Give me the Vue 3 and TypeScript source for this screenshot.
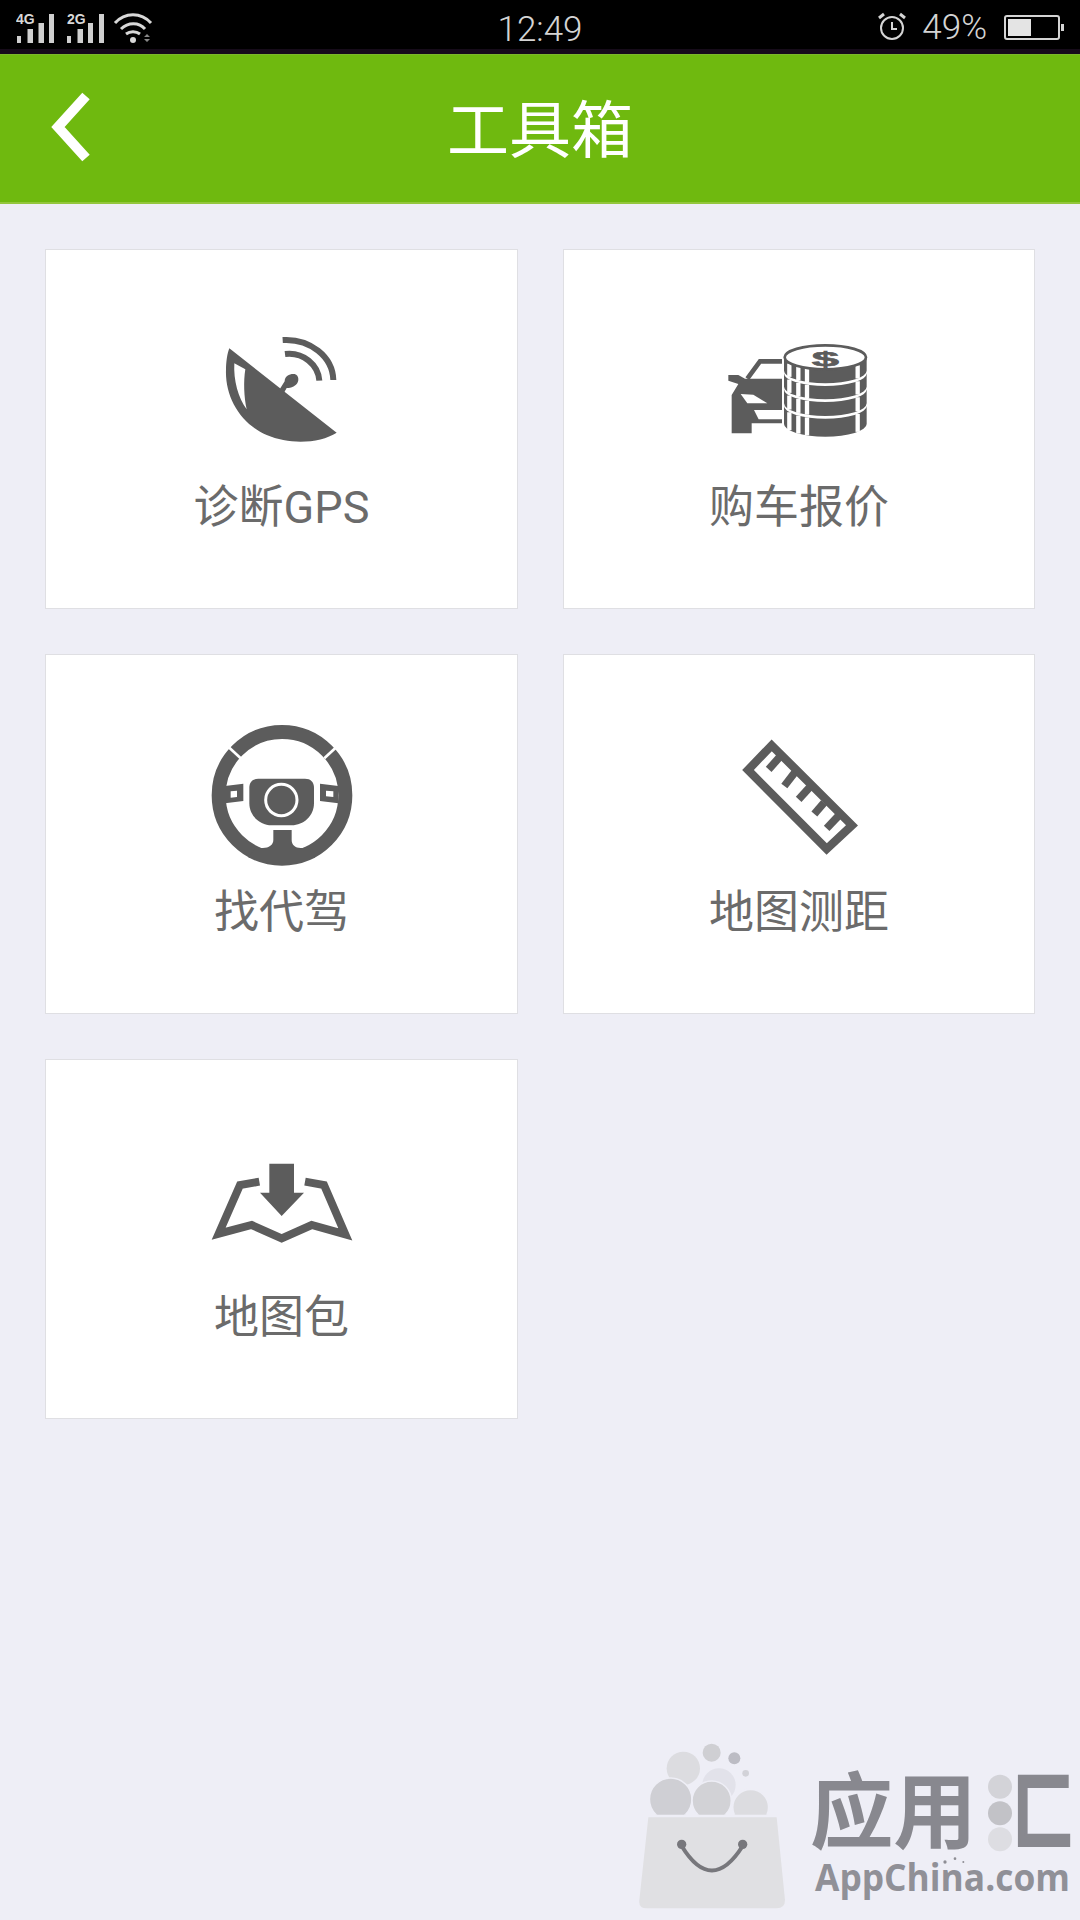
<script setup lang="ts">
const tools = [
  { id: 'gps', label: '诊断GPS', viewBox: '6 -27 540 480' },
  { id: 'price', label: '购车报价', viewBox: '-3 -27 540 480' },
  { id: 'driver', label: '找代驾', viewBox: '6 0 540 480' },
  { id: 'ruler', label: '地图测距', viewBox: '-33 -30 540 480' },
  { id: 'map', label: '地图包', viewBox: '6 -60 540 480' },
]

// each coin is a dark band, the gap to the next one stays white
const coinLayers = [
  { y: 112, h: 40 },
  { y: 160, h: 40 },
  { y: 208, h: 42 },
  { y: 258, h: 54 },
]
const coinStripes = [238, 265, 291, 443]
const arcDrop = (x: number) => 38 * Math.sqrt(1 - ((x - 346) / 124) ** 2)

const rulerTicks = [
  [180, 92, 146, 130],
  [224, 140, 193, 180],
  [268, 185, 236, 220],
  [312, 230, 283, 264],
  [355, 270, 320, 307],
]
</script>

<template>
  <div class="page">
    <div class="status">
      <div class="status-left">
        <svg width="150" height="40" viewBox="0 0 150 40">
          <text x="0" y="17" class="net">4G</text>
          <path d="M1 29h4v7H1zM11.500 22H17v14h-5.500zM22.500 16H28v20h-5.500zM33 7h5v29h-5z" fill="#cfcfcf" />
          <text x="51" y="17" class="net">2G</text>
          <path d="M51 29h4v7h-4zM61.500 22H67v14h-5.500zM72 16h5v20h-5zM83 7h5v29h-5z" fill="#cfcfcf" />
          <g fill="none" stroke="#d8d8d8" stroke-width="3">
            <path d="M99 16c10-11 26-11 36 0" />
            <path d="M105 22c7-7 18-7 24 0" />
            <path d="M110 27c4-3 10-3 14 0" />
          </g>
          <circle cx="117" cy="33" r="3" fill="#d8d8d8" />
          <path d="M128 30l3-3 3 3zM128 32h6l-3 3z" fill="#888" />
        </svg>
      </div>
      <div class="clock">12:49</div>
      <div class="status-right">
        <svg width="30" height="30" viewBox="0 0 30 30" fill="none" stroke="#d4d4d4" stroke-width="2">
          <circle cx="15" cy="16" r="11" />
          <path d="M15 10v7h5" />
          <path d="M2 6l5-4M28 6l-5-4" stroke-width="3" />
        </svg>
        <span class="percent">49%</span>
        <div class="battery">
          <div class="battery-fill"></div>
        </div>
        <div class="battery-cap"></div>
      </div>
    </div>

    <div class="header">
      <svg class="back" width="60" height="80" viewBox="0 0 60 80">
        <path d="M37 7L9 38l28 31" fill="none" stroke="#fff" stroke-width="10" />
      </svg>
      <div class="title">工具箱</div>
      <div></div>
    </div>

    <div class="grid">
      <div v-for="tool in tools" :key="tool.id" class="card">
        <svg class="icon" width="180" height="160" :viewBox="tool.viewBox">
          <g v-if="tool.id === 'gps'">
            <path d="M118 85L440 338C390 370 300 375 230 345C150 310 105 230 108 150C108 125 112 100 118 85Z" fill="#5c5c5c" />
            <path d="M133 130L166 148C160 185 162 230 170 268C145 235 130 180 133 130Z" fill="#fff" />
            <path d="M270 206L284 184C284 166 302 160 314 162C328 166 328 186 318 194C308 202 298 204 290 204L282 218Z" fill="#5c5c5c" />
            <g fill="none" stroke="#5c5c5c" stroke-width="18">
              <path d="M278 60C360 55 428 110 430 180" />
              <path d="M285 102C340 95 385 135 388 182" />
            </g>
          </g>

          <g v-else-if="tool.id === 'price'">
            <path d="M225 124H150L112 176" fill="none" stroke="#5c5c5c" stroke-width="14" />
            <path d="M55 165H85L105 176H230V310H125V340H65V225L85 192L55 182Z" fill="#5c5c5c" />
            <path d="M92 222L130 224L172 250H112Z" fill="#fff" />
            <path d="M132 270H225V298H146Z" fill="#fff" />
            <path d="M216 112H476V356H216Z" fill="#fff" />
            <g v-for="c in coinLayers" :key="c.y">
              <path :d="`M222 ${c.y}A124 38 0 0 0 470 ${c.y}V${c.y + c.h}A124 38 0 0 1 222 ${c.y + c.h}Z`" fill="#5c5c5c" />
              <line
                v-for="x in coinStripes"
                :key="x"
                :x1="x"
                :y1="c.y + arcDrop(x)"
                :x2="x"
                :y2="c.y + arcDrop(x) + c.h"
                stroke="#fff"
                stroke-width="13"
              />
            </g>
            <ellipse cx="346" cy="112" rx="122" ry="36" fill="#fff" stroke="#5c5c5c" stroke-width="8" />
            <text transform="translate(346 137) scale(2.1 .85)" class="dollar">$</text>
          </g>

          <g v-else-if="tool.id === 'driver'">
            <circle cx="276" cy="238" r="190" fill="none" stroke="#5c5c5c" stroke-width="42" />
            <path d="M118 95L152 127M437 95L403 127" stroke="#fff" stroke-width="8" />
            <path d="M205 188H345C362 188 372 198 372 215V262C372 300 340 328 305 328H245C210 328 178 300 178 262V215C178 198 188 188 205 188Z" fill="#5c5c5c" />
            <circle cx="274" cy="252" r="47" fill="#5c5c5c" stroke="#fff" stroke-width="9" />
            <path d="M250 342H305V372C305 392 325 402 352 392L375 425H175L198 392C225 402 250 392 250 372Z" fill="#5c5c5c" />
            <path d="M105 210L160 203V255L105 262Z" fill="#5c5c5c" />
            <path d="M122 226L141 224V243L122 245Z" fill="#fff" />
            <path d="M390 203L445 210V262L390 255Z" fill="#5c5c5c" />
            <path d="M408 224L430 226V243L408 241Z" fill="#fff" />
          </g>

          <g v-else-if="tool.id === 'ruler'">
            <path d="M155 58L396 298L320 369L84 132Z" fill="none" stroke="#5c5c5c" stroke-width="25" />
            <line v-for="(t, i) in rulerTicks" :key="i" :x1="t[0]" :y1="t[1]" :x2="t[2]" :y2="t[3]" stroke="#5c5c5c" stroke-width="23" />
          </g>

          <g v-else>
            <path d="M238 68H312V155H342L275 225L210 155H238Z" fill="#5c5c5c" />
            <path d="M208 122L150 132L86 278L185 252L275 292L365 252L466 280L402 132L345 122" fill="none" stroke="#5c5c5c" stroke-width="24" />
          </g>
        </svg>
        <div class="label">{{ tool.label }}</div>
      </div>
    </div>

    <svg class="watermark" width="460" height="190" viewBox="0 0 1380 570">
      <defs>
        <clipPath id="bag-top">
          <rect x="0" y="0" width="600" height="254" />
        </clipPath>
      </defs>
      <g clip-path="url(#bag-top)">
        <circle cx="190" cy="115" r="50" fill="#dcdce0" />
        <circle cx="297" cy="165" r="50" fill="#e2e2ea" />
        <circle cx="152" cy="208" r="64" fill="#cfcfd4" stroke="#eeeef6" stroke-width="5" />
        <circle cx="275" cy="212" r="59" fill="#d2d2d6" stroke="#eeeef6" stroke-width="5" />
        <circle cx="392" cy="232" r="54" fill="#dcdce0" stroke="#eeeef6" stroke-width="5" />
      </g>
      <circle cx="275" cy="68" r="27" fill="#cfcfd3" />
      <circle cx="343" cy="85" r="18" fill="#bcbcc4" />
      <circle cx="377" cy="130" r="10" fill="#d2d2d8" />
      <path d="M85 262H470L495 510Q495 535 470 535H80Q55 535 58 510Z" fill="#e0e0e3" />
      <path d="M185 348Q275 495 368 348" fill="none" stroke="#77777c" stroke-width="12" />
      <circle cx="185" cy="343" r="14" fill="#77777c" />
      <circle cx="368" cy="343" r="14" fill="#77777c" />
      <text x="570" y="335" class="wm-cn">应用</text>
      <circle cx="1140" cy="170" r="36" fill="#d3d3d8" />
      <circle cx="1140" cy="250" r="36" fill="#c2c2c7" />
      <circle cx="1140" cy="328" r="36" fill="#dddde2" />
      <text transform="translate(1180 335) scale(.72 1)" class="wm-cn wm-box">匚</text>
      <text x="585" y="482" class="wm-en" textLength="765" lengthAdjust="spacingAndGlyphs">AppChina.com</text>
      <circle cx="975" cy="396" r="5" fill="#8e8e95" />
      <circle cx="1005" cy="386" r="4" fill="#8e8e95" />
      <circle cx="1030" cy="396" r="3" fill="#8e8e95" />
    </svg>
  </div>
</template>

<style scoped>
.page {
  position: relative;
  width: 1080px;
  height: 1920px;
  overflow: hidden;
  background: #eeeef6;
  font-family: Roboto, "Noto Sans CJK SC", sans-serif;
}
.status {
  box-sizing: border-box;
  height: 54px;
  background: #000;
  border-bottom: 5px solid #160b1a;
  display: grid;
  grid-template-columns: 1fr auto 1fr;
  align-items: center;
  padding: 0 16px;
  color: #d4d4d4;
}
.status-left {
  display: flex;
  align-items: center;
  padding-top: 3px;
}
.net {
  font-family: "Liberation Sans", sans-serif;
  font-size: 14px;
  font-weight: 700;
  fill: #d8d8d8;
}
.clock {
  font-size: 35px;
  font-weight: 300;
  padding-top: 9px;
}
.status-right {
  display: flex;
  align-items: center;
  justify-content: flex-end;
  padding-top: 4px;
}
.percent {
  font-size: 35px;
  font-weight: 300;
  margin: 0 17px 0 15px;
}
.battery {
  box-sizing: border-box;
  width: 56px;
  height: 25px;
  border: 2px solid #d4d4d4;
  border-radius: 3px;
  padding: 2px;
}
.battery-fill {
  width: 23px;
  height: 100%;
  background: #e4e4e4;
}
.battery-cap {
  width: 3px;
  height: 7px;
  margin-left: 1px;
  background: #d4d4d4;
}
.header {
  box-sizing: border-box;
  height: 150px;
  background: #6fb90f;
  border-top: 1px solid #7cb82a;
  border-bottom: 2px solid #93c63c;
  display: grid;
  grid-template-columns: 1fr auto 1fr;
  align-items: center;
  padding: 0 49px;
}
.back {
  display: block;
}
.title {
  color: #fff;
  font-size: 62px;
  line-height: 70px;
  font-weight: 400;
  padding-top: 6px;
}
.grid {
  display: grid;
  grid-template-columns: 473px 472px;
  grid-auto-rows: 360px;
  gap: 45px;
  padding: 45px 45px 0;
}
.card {
  box-sizing: border-box;
  background: #fff;
  border: 1px solid #dfdfe3;
  padding-top: 61px;
  display: flex;
  flex-direction: column;
  align-items: center;
}
.icon {
  display: block;
}
.label {
  margin-top: 7px;
  font-size: 45px;
  line-height: 60px;
  color: #6b6b6b;
}
.dollar {
  font-family: "Liberation Sans", sans-serif;
  font-size: 70px;
  font-weight: 700;
  text-anchor: middle;
  fill: #5c5c5c;
  stroke: #5c5c5c;
  stroke-width: 2px;
}
.watermark {
  position: absolute;
  right: 0;
  bottom: 0;
}
.wm-cn {
  font-family: "Noto Sans CJK SC", sans-serif;
  font-size: 250px;
  font-weight: 700;
  fill: #88888f;
}
.wm-box {
  stroke: #88888f;
  stroke-width: 12px;
}
.wm-en {
  font-family: "Open Sans", sans-serif;
  font-size: 112px;
  font-weight: 700;
  fill: #909097;
}
</style>
